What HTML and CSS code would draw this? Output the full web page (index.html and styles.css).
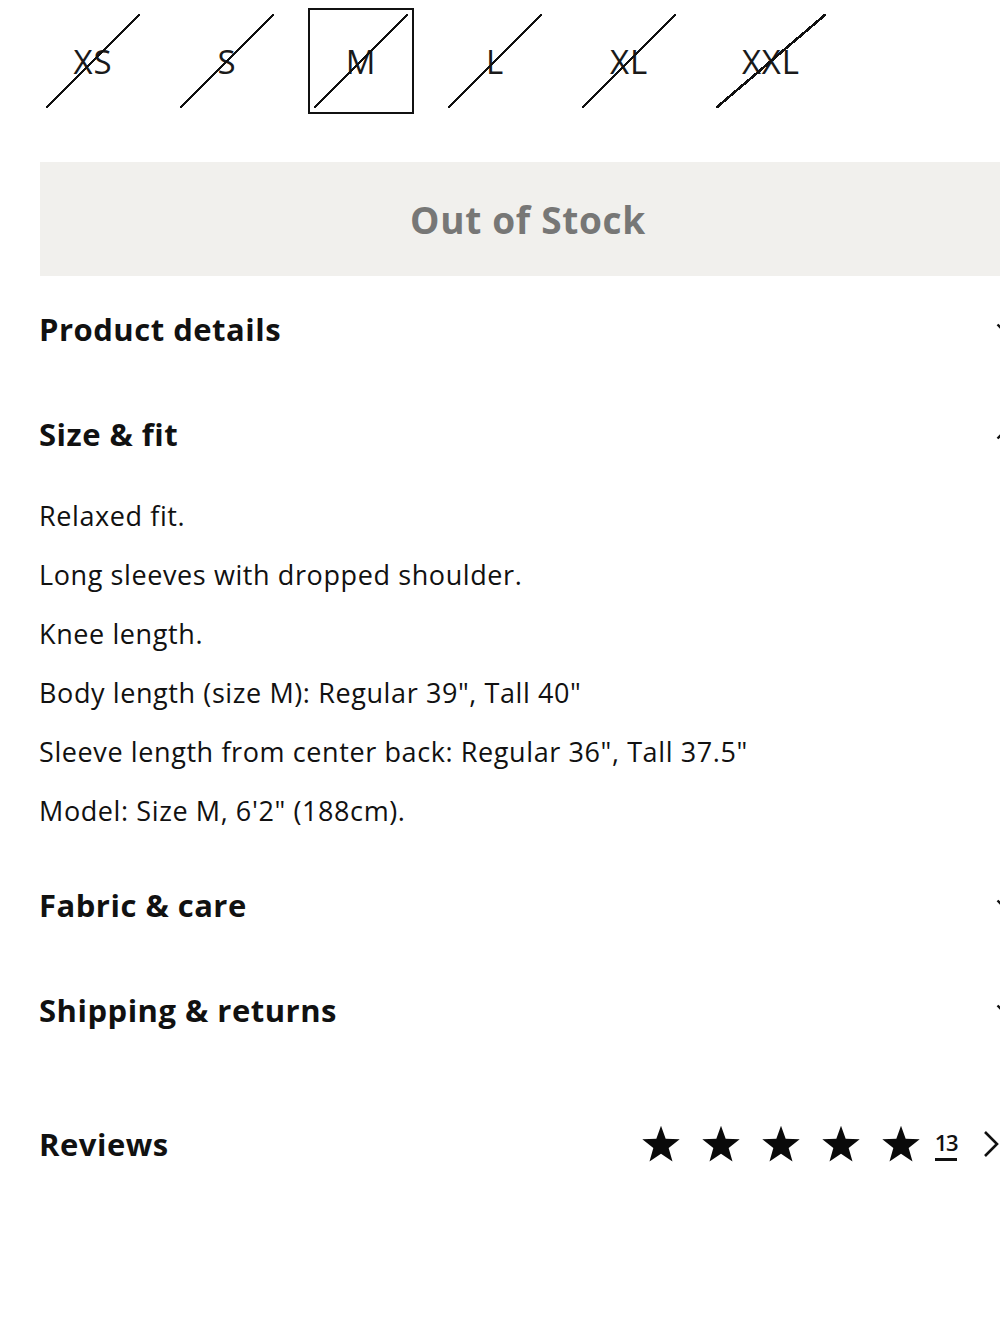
FILE: index.html
```html
<!DOCTYPE html>
<html lang="en">
<head>
<meta charset="utf-8">
<title>Product</title>
<link rel="stylesheet" href="styles.css">
</head>
<body>
<div class="page">
  <div class="sizes">
    <div class="size">XS</div>
    <div class="size">S</div>
    <div class="size selected">M</div>
    <div class="size">L</div>
    <div class="size">XL</div>
    <div class="size">XXL</div>
  </div>

  <div class="stock-btn">Out of Stock</div>

  <div class="acc">
    <div class="acc-head">
      <h2>Product details</h2>
      <svg class="chev" width="20" height="12" viewBox="0 0 20 12"><polyline points="1.5,1.5 10,10 18.5,1.5" fill="none" stroke="#111" stroke-width="2.4"/></svg>
    </div>
  </div>

  <div class="acc open">
    <div class="acc-head">
      <h2>Size &amp; fit</h2>
      <svg class="chev" width="20" height="12" viewBox="0 0 20 12"><polyline points="1.5,10.5 10,2 18.5,10.5" fill="none" stroke="#111" stroke-width="2.4"/></svg>
    </div>
    <div class="acc-body">
      <p>Relaxed fit.</p>
      <p>Long sleeves with dropped shoulder.</p>
      <p>Knee length.</p>
      <p>Body length (size M): Regular 39", Tall 40"</p>
      <p>Sleeve length from center back: Regular 36", Tall 37.5"</p>
      <p>Model: Size M, 6'2" (188cm).</p>
    </div>
  </div>

  <div class="acc">
    <div class="acc-head">
      <h2>Fabric &amp; care</h2>
      <svg class="chev" width="20" height="12" viewBox="0 0 20 12"><polyline points="1.5,1.5 10,10 18.5,1.5" fill="none" stroke="#111" stroke-width="2.4"/></svg>
    </div>
  </div>

  <div class="acc">
    <div class="acc-head">
      <h2>Shipping &amp; returns</h2>
      <svg class="chev" width="20" height="12" viewBox="0 0 20 12"><polyline points="1.5,1.5 10,10 18.5,1.5" fill="none" stroke="#111" stroke-width="2.4"/></svg>
    </div>
  </div>

  <div class="reviews">
    <h2>Reviews</h2>
    <div class="rating">
      <div class="stars">
        <svg class="star" viewBox="0 0 24 24"><polygon points="12,1 14.8,8.9 23.2,9.2 16.6,14.4 18.9,22.5 12,17.8 5.1,22.5 7.4,14.4 0.8,9.2 9.2,8.9"/></svg>
        <svg class="star" viewBox="0 0 24 24"><polygon points="12,1 14.8,8.9 23.2,9.2 16.6,14.4 18.9,22.5 12,17.8 5.1,22.5 7.4,14.4 0.8,9.2 9.2,8.9"/></svg>
        <svg class="star" viewBox="0 0 24 24"><polygon points="12,1 14.8,8.9 23.2,9.2 16.6,14.4 18.9,22.5 12,17.8 5.1,22.5 7.4,14.4 0.8,9.2 9.2,8.9"/></svg>
        <svg class="star" viewBox="0 0 24 24"><polygon points="12,1 14.8,8.9 23.2,9.2 16.6,14.4 18.9,22.5 12,17.8 5.1,22.5 7.4,14.4 0.8,9.2 9.2,8.9"/></svg>
        <svg class="star" viewBox="0 0 24 24"><polygon points="12,1 14.8,8.9 23.2,9.2 16.6,14.4 18.9,22.5 12,17.8 5.1,22.5 7.4,14.4 0.8,9.2 9.2,8.9"/></svg>
      </div>
      <span class="count">13</span>
      <svg class="arrow" width="16" height="28" viewBox="0 0 16 28"><polyline points="2,2 14,14 2,26" fill="none" stroke="#111" stroke-width="2.6"/></svg>
    </div>
  </div>
</div>
</body>
</html>
```

FILE: styles.css
```css
html, body {
  margin: 0;
  padding: 0;
  background: #fff;
  overflow: hidden;
}

body {
  font-family: "Open Sans", "Noto Sans", "Liberation Sans", sans-serif;
  color: #111;
}

.page {
  width: 977px;
  padding: 8px 40px 0 39px;
}

.sizes {
  display: flex;
  gap: 28px;
  margin-left: 1px;
}

.size {
  position: relative;
  box-sizing: border-box;
  min-width: 106px;
  height: 106px;
  padding: 0 30px;
  border: 2px solid transparent;
  display: flex;
  align-items: center;
  justify-content: center;
  font-size: 33px;
  letter-spacing: 0.8px;
  color: #1a1a1a;
}

.size.selected {
  border-color: #111;
}

.size::after {
  content: "";
  position: absolute;
  inset: 4px;
  background: linear-gradient(to bottom right,
    transparent calc(50% - 1.3px),
    #111 calc(50% - 1.3px),
    #111 calc(50% + 1.3px),
    transparent calc(50% + 1.3px));
}

.stock-btn {
  margin-top: 48px;
  margin-left: 1px;
  height: 114px;
  background: #f1f0ed;
  display: flex;
  align-items: center;
  justify-content: center;
  font-size: 37px;
  letter-spacing: 0.7px;
  font-weight: 700;
  color: #777776;
}

.acc-head {
  height: 105px;
  display: flex;
  align-items: center;
  justify-content: space-between;
}

.acc:first-of-type .acc-head {
  margin-top: 2px;
}

h2 {
  margin: 0;
  font-size: 31px;
  letter-spacing: 0.5px;
  font-weight: 700;
  color: #111;
}

.chev {
  flex: none;
}

.acc-body {
  padding-bottom: 12px;
}

.acc-body p {
  margin: 0;
  font-size: 27px;
  letter-spacing: 0.6px;
  line-height: 59px;
  color: #111;
}

.reviews {
  margin-top: 29px;
  height: 105px;
  display: flex;
  align-items: center;
  justify-content: space-between;
}

.rating {
  display: flex;
  align-items: center;
  margin-right: 17px;
}

.stars {
  display: flex;
  gap: 20px;
}

.star {
  width: 40px;
  height: 40px;
  fill: #0a0a0a;
}

.count {
  margin-left: 14px;
  font-size: 22px;
  letter-spacing: -1.5px;
  font-weight: 600;
  border-bottom: 3px solid #111;
  line-height: 30px;
  padding-bottom: 1px;
}

.arrow {
  margin-left: 26px;
}
```
